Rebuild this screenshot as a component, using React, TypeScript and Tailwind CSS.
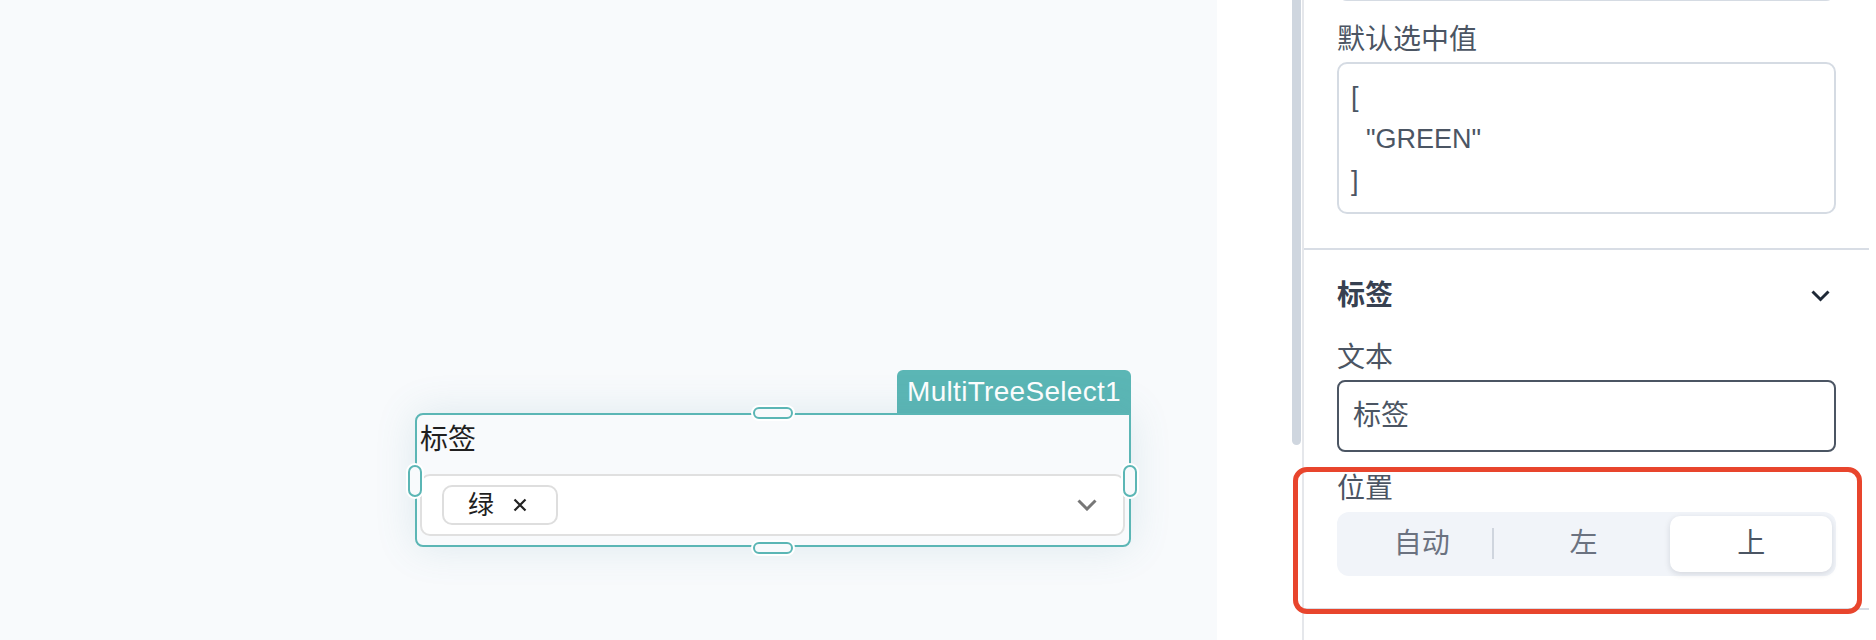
const font = "font-['Liberation_Sans','Noto_Sans_CJK_SC',sans-serif]";

function Handle({ className }: { className: string }) {
  return (
    <div
      className={
        "absolute rounded-full border-2 border-[#5bb6b5] bg-[#f8fafc] shadow-[0_0_0_2px_#ffffff] " +
        className
      }
    />
  );
}

function CanvasWidget() {
  return (
    <div className="absolute left-[415px] top-[370px] w-[716px]">
      {/* name tag */}
      <div className="flex justify-end">
        <div className="flex h-[43px] w-[234px] items-center justify-center rounded-t-[6px] bg-[#5bb6b5] text-[28px] tracking-[0.3px] text-white">
          MultiTreeSelect1
        </div>
      </div>

      <div className="relative h-[134px] rounded-[8px] rounded-tr-none border-2 border-[#5bb6b5] bg-[#f8fafc] shadow-[0_0_40px_rgba(80,140,160,0.16)]">
        <div className="pl-[3px] pt-[6px] text-[28px] leading-[38px] text-[#1f1f1f]">标签</div>

        <div className="ml-[3px] mr-[4px] mt-[15px] flex h-[62px] items-center rounded-[10px] border-2 border-[#e0e0e0] bg-white pl-[20px] pr-[26px]">
          <div className="flex h-[40px] w-[116px] items-center rounded-[10px] border-2 border-[#dedede] pl-[24px]">
            <span className="text-[26px] leading-none text-[#1f1f1f]">绿</span>
            <svg className="ml-[19px]" width="14" height="14" viewBox="0 0 14 14">
              <path d="M1.5 1.5 L12.5 12.5 M12.5 1.5 L1.5 12.5" stroke="#222" strokeWidth="2.2" fill="none" />
            </svg>
          </div>
          <div className="flex-1" />
          <svg width="20" height="12" viewBox="0 0 20 12">
            <path d="M1.5 1.5 L10 10 L18.5 1.5" stroke="#777" strokeWidth="3" fill="none" />
          </svg>
        </div>

        <Handle className="left-1/2 top-[-8px] h-[12px] w-[40px] -translate-x-1/2" />
        <Handle className="bottom-[-9px] left-1/2 h-[12px] w-[40px] -translate-x-1/2" />
        <Handle className="left-[-9px] top-[50px] h-[32px] w-[14px]" />
        <Handle className="right-[-8px] top-[50px] h-[32px] w-[14px]" />
      </div>
    </div>
  );
}

function Segmented() {
  const items = ["自动", "左", "上"];
  const active = 2;
  return (
    <div className="mt-[3px] flex h-[64px] rounded-[12px] bg-[#f1f4f9] p-[4px]">
      {items.map((t, i) => (
        <div
          key={t}
          className={
            i === active
              ? "relative ml-[6px] flex flex-1 items-center justify-center rounded-[10px] bg-white text-[28px] text-[#4b5563] shadow-[0_2px_6px_rgba(15,23,42,0.13)]"
              : "relative flex flex-1 items-center justify-center text-[28px] text-[#6b7280]"
          }
        >
          {t}
          {i === 0 && <span className="absolute right-[9px] top-[12px] h-[31px] w-[2px] bg-[#cfd5de]" />}
        </div>
      ))}
    </div>
  );
}

function Panel() {
  return (
    <div className="flex w-[567px] shrink-0 flex-col border-l-2 border-[#e5e7eb] bg-white text-[#4b5563]">
      {/* value section */}
      <div className="border-b-2 border-[#d8dde5] px-[33px] pb-[34px]">
        <div className="mt-[-60px] h-[61px] rounded-[10px] border-2 border-[#d5dbe3]" />
        <div className="mt-[19px] text-[28px] leading-[40px]">默认选中值</div>
        <div className="mt-[2px] h-[152px] rounded-[10px] border-2 border-[#d5dbe3] px-[12px] pt-[12px] text-[27px] leading-[42px] whitespace-pre">
          <div>[</div>
          <div>{'  "GREEN"'}</div>
          <div>]</div>
        </div>
      </div>

      {/* label section */}
      <div className="border-b-2 border-[#d8dde5] px-[33px] pb-[32px] pt-[26px]">
        <div className="flex items-center justify-between">
          <span className="text-[28px] font-semibold leading-[40px] text-[#374151]">标签</span>
          <svg className="mr-[6px]" width="19" height="12" viewBox="0 0 19 12">
            <path d="M1.5 1.5 L9.5 9.5 L17.5 1.5" stroke="#1f2937" strokeWidth="3" fill="none" />
          </svg>
        </div>
        <div className="mt-[22px] text-[28px] leading-[40px]">文本</div>
        <div className="mt-[2px] flex h-[72px] items-center rounded-[8px] border-2 border-[#4b5563] pl-[14px] text-[28px]">
          标签
        </div>
        <div className="mt-[17px] text-[28px] leading-[40px]">位置</div>
        <Segmented />
      </div>
    </div>
  );
}

export default function App() {
  return (
    <div className={"relative flex h-[640px] w-[1876px] overflow-hidden bg-white " + font}>
      <div className="relative w-[1217px] shrink-0 bg-[#f8fafc]">
        <CanvasWidget />
      </div>

      <div className="flex w-[85px] shrink-0 justify-end bg-white">
        <div className="mr-[1px] h-[445px] w-[9px] rounded-b-full bg-[#cfd6df]" />
      </div>

      <Panel />

      {/* highlight annotation */}
      <div className="pointer-events-none absolute left-[1293px] top-[467px] h-[147px] w-[569px] rounded-[14px] border-[5px] border-[#e8452d]" />
    </div>
  );
}
